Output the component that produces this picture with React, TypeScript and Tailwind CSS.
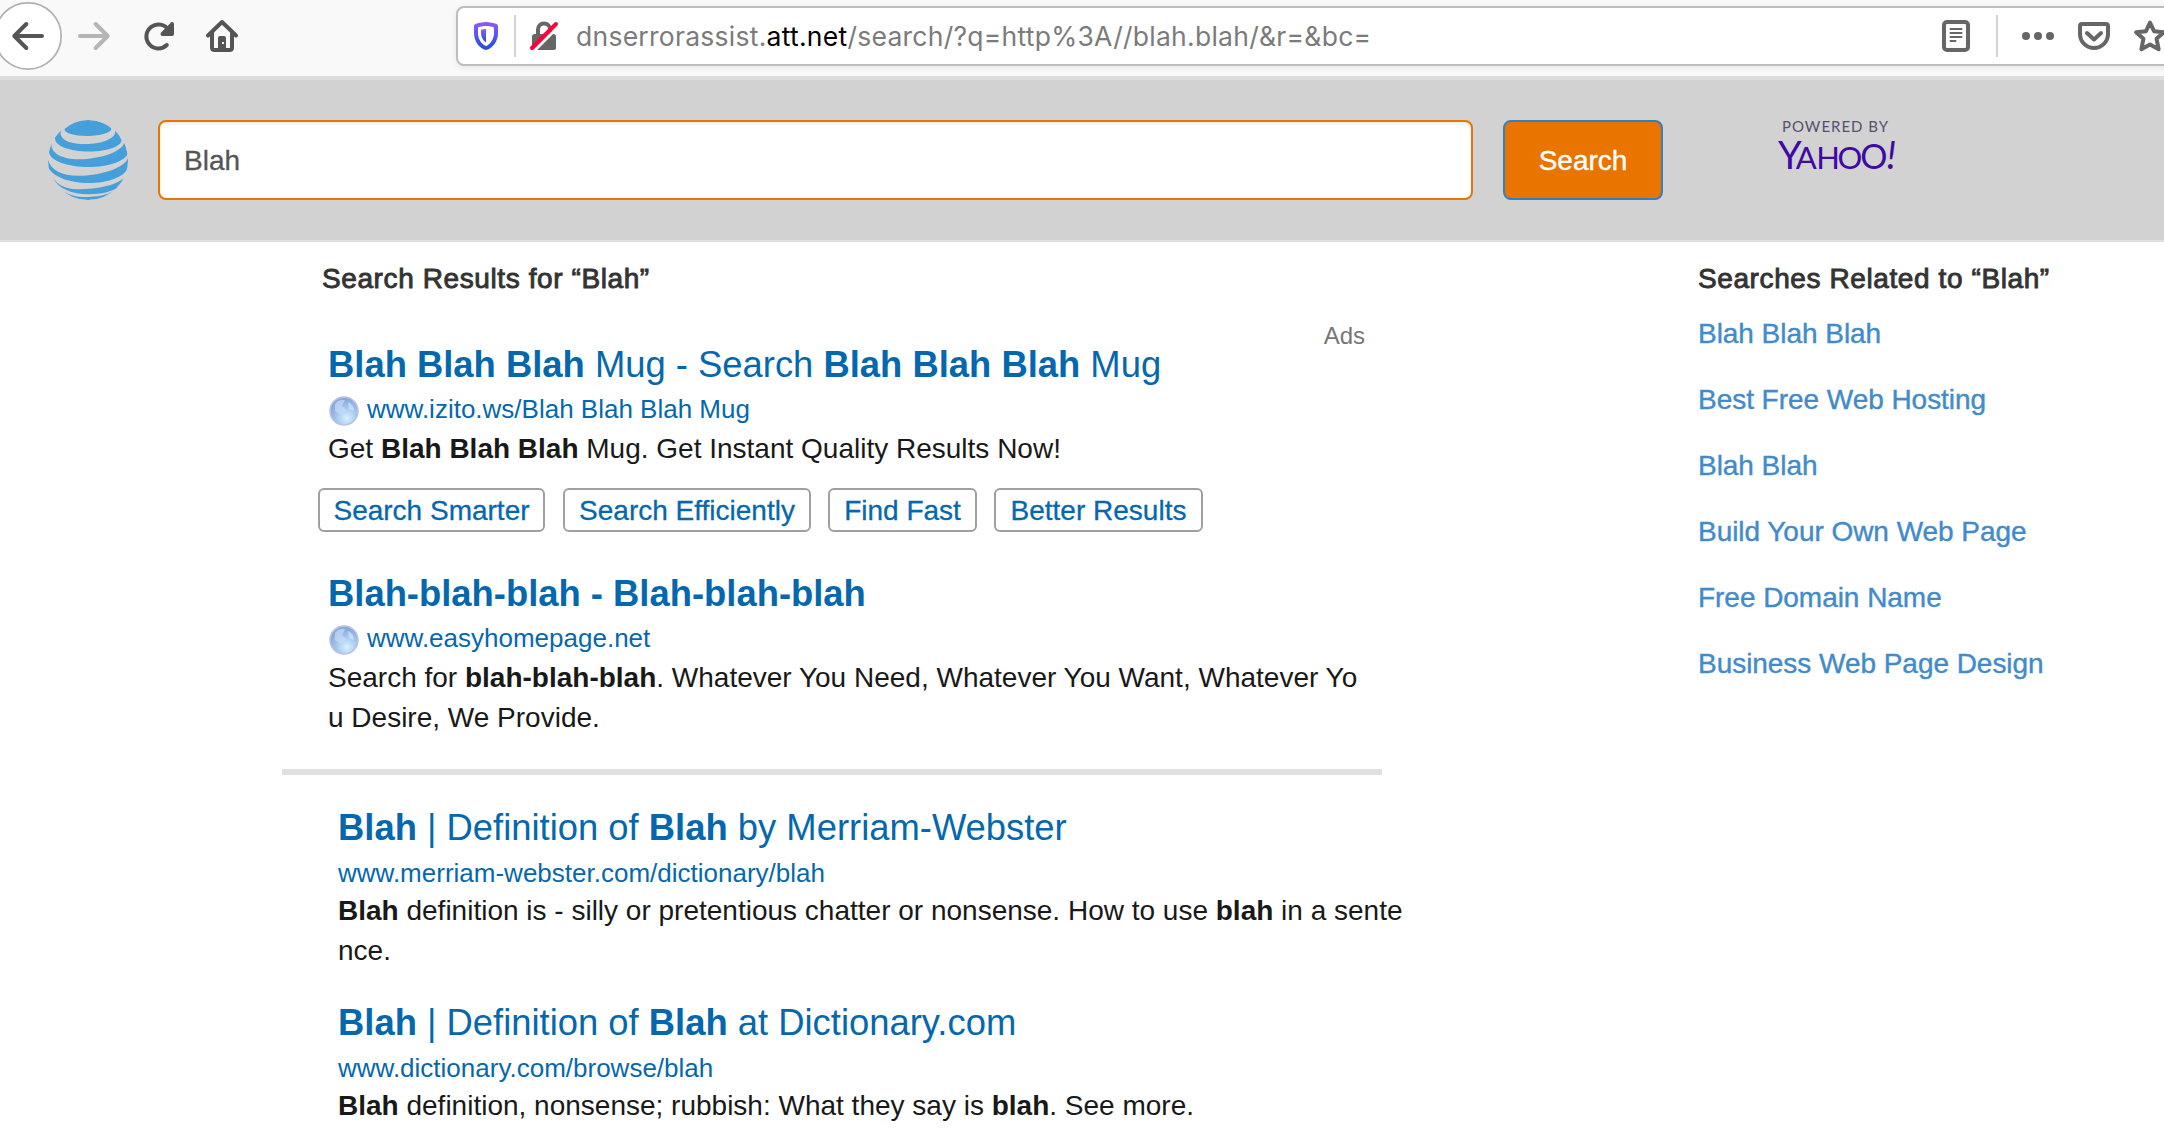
import type { ReactNode } from "react";

function AttGlobe() {
  return (
    <svg className="h-20 w-20 shrink-0" viewBox="0 0 80 80" fill="#459fdb">
      <clipPath id="globe">
        <circle cx="40" cy="40" r="40" />
      </clipPath>
      <g clipPath="url(#globe)">
        <path d="M16.500 9Q27 0 40 0T63 8C65 12 53 16 39 16C26 16 16 13 16.500 9Z" />
        <path d="M13 10C11 17 16 24 37 24C55 24 69 18 67 10.500Q71 14 73.500 20C74 26 60 31.500 41 31.500C22 31.500 6 26 7 17.500Q9 13 13 10Z" />
        <path d="M3.500 23C2 33 14 39.300 31 39.300C52 39.300 77 31 76 21.500Q79 27 79.500 34C77 41 60 47 41 47C20 47 2 41 1 32Q1.500 28 3.500 23Z" />
        <path d="M0 40C3 50 14 55.800 30 55.800C52 55.800 77 48 80 38V48C76 57 60 63 41 63C20 63 4 56 0 47Z" />
        <path d="M4.500 57C8 64 17 69.300 29 69.300C50 69.300 71 65 77.500 56Q75 62 71 66.500C64 72 53 74.200 41 74.200C24 74.200 10 69 4.500 57Z" />
        <path d="M16 71.500C21 75 28 77 37 77C49 77 60 75 66 70.500C60 77 50 80 40 80S21 77 16 71.500Z" />
      </g>
    </svg>
  );
}

function NavIcons() {
  return (
    <svg className="h-[76px] w-[248px] shrink-0" viewBox="0 0 248 76" fill="none" strokeLinecap="round" strokeLinejoin="round">
      <circle cx="28" cy="36" r="33.200" fill="#fff" stroke="#b1b1b1" strokeWidth="1.700" />
      <path d="M42 36H14.500M26.300 24L14.300 36L26.300 48" stroke="#555556" strokeWidth="4" />
      <path d="M80 36H107.500M95.700 24L107.700 36L95.700 48" stroke="#b5b5b5" strokeWidth="4" />
      <path d="M166.800 45A12 12 0 1 1 168.500 30" stroke="#555556" strokeWidth="4" />
      <path d="M172 24V34H162.500L172 24.500Z" fill="#555556" stroke="#555556" strokeWidth="4" />
      <path d="M208 35.500L222 22L236 35.500M212 33V47.500Q212 50 214.500 50H229.500Q232 50 232 47.500V33" stroke="#555556" strokeWidth="4" />
      <path d="M218 50V38Q218 36 220 36H224Q226 36 226 38V50Z" fill="#555556" />
      <rect x="222" y="42" width="2" height="2" fill="#f9f9fa" />
    </svg>
  );
}

function ShieldIcon() {
  return (
    <svg className="h-7 w-6 shrink-0" viewBox="0 0 24 28" fill="none">
      <linearGradient id="shield" x1="0" y1="0" x2="0" y2="1">
        <stop offset="0" stopColor="#9059ff" />
        <stop offset="1" stopColor="#2050d0" />
      </linearGradient>
      <path
        d="M12 0C16 0 20 1 22.500 2Q24 2.500 24 4V11C24 19 19 26.500 12 28C5 26.500 0 19 0 11V4Q0 2.500 1.500 2C4 1 8 0 12 0ZM12 4C9 4 6 4.600 4 5.400V11C4 17 7.500 22.300 12 24C16.500 22.300 20 17 20 11V5.400C18 4.600 15 4 12 4Z"
        fill="url(#shield)"
        fillRule="evenodd"
      />
      <path d="M12 7V20.500C9 18.500 7 15 7 11V7.800Q9.500 7 12 7Z" fill="url(#shield)" />
    </svg>
  );
}

function InsecureLockIcon() {
  return (
    <svg className="h-8 w-8 shrink-0" viewBox="0 0 32 32" fill="none">
      <path d="M10 15V9.500A6 6 0 0 1 22 9.500V15" stroke="#666" strokeWidth="4" />
      <rect x="4" y="14" width="24" height="16" rx="2.500" fill="#666" />
      <path d="M6 31L30 7" stroke="#fff" strokeWidth="3" />
      <path d="M4 28L28 4" stroke="#ff0039" strokeWidth="4" strokeLinecap="round" />
    </svg>
  );
}

function PageActions() {
  return (
    <svg className="h-16 w-[226px] shrink-0" viewBox="1940 4 226 64" fill="none" stroke="#666" strokeLinecap="round" strokeLinejoin="round">
      <rect x="1944" y="22" width="24" height="28" rx="3" strokeWidth="4" />
      <path d="M1950.500 29H1961.500M1950.500 33H1961.500M1950.500 37H1961.500M1950.500 41H1955.500" strokeWidth="2" />
      <path d="M1997 15V57" stroke="#d2d2d2" strokeWidth="2" strokeLinecap="butt" />
      <g fill="#666" stroke="none">
        <circle cx="2026" cy="36" r="4" />
        <circle cx="2038" cy="36" r="4" />
        <circle cx="2050" cy="36" r="4" />
      </g>
      <path d="M2082 24H2106Q2108 24 2108 26V34A14 14 0 0 1 2080 34V26Q2080 24 2082 24Z" strokeWidth="4" />
      <path d="M2087 33L2094 39.500L2101 33" strokeWidth="4" />
      <path d="M2150 22.500L2154 31.200L2163.800 32.300L2156.600 38.800L2158.600 49.200L2150 44.600L2141.400 49.200L2143.400 38.800L2136.200 32.300L2146 31.200Z" strokeWidth="4" />
    </svg>
  );
}

function Favicon() {
  return (
    <svg className="mt-[5px] ml-px h-[30px] w-[30px] shrink-0" viewBox="0 0 30 30">
      <radialGradient id="orb" cx="0.6" cy="0.75" r="0.8">
        <stop offset="0" stopColor="#d9f1fd" />
        <stop offset="0.450" stopColor="#a4c8ee" />
        <stop offset="0.850" stopColor="#86a6dc" />
        <stop offset="1" stopColor="#a9b6de" />
      </radialGradient>
      <circle cx="15" cy="15" r="14" fill="url(#orb)" stroke="#b9c3e4" strokeWidth="1.500" />
      <path d="M6 8Q10 3 16 4L13 10L17 14L12 19L6 15Z" fill="#c8dcf5" opacity="0.700" />
      <path d="M19 6Q25 9 25 15L20 13Z" fill="#d3e6fa" opacity="0.700" />
    </svg>
  );
}

function Title({ children }: { children: ReactNode }) {
  return <h3 className="whitespace-nowrap text-[36.4px] leading-10 text-[#0568ae]">{children}</h3>;
}

function Url({ icon, children }: { icon?: boolean; children: ReactNode }) {
  return (
    <div className={`${icon ? "mt-1.5 mb-0.5" : "mt-[7px]"} flex h-9 gap-2 text-[26px] leading-9 text-[#0568ae]`}>
      {icon && <Favicon />}
      <span>{children}</span>
    </div>
  );
}

function Description({ children }: { children: ReactNode }) {
  return <p className="whitespace-nowrap text-[28px] leading-10 text-[#191919]">{children}</p>;
}

const chips = [
  { label: "Search Smarter", box: "w-[227px]" },
  { label: "Search Efficiently", box: "ml-[18px] w-[248px]" },
  { label: "Find Fast", box: "ml-[17px] w-[149px]" },
  { label: "Better Results", box: "ml-[17px] w-[209px]" },
];

const related = [
  "Blah Blah Blah",
  "Best Free Web Hosting",
  "Blah Blah",
  "Build Your Own Web Page",
  "Free Domain Name",
  "Business Web Page Design",
];

export default function App() {
  return (
    <div className="h-[1146px] w-[2164px] overflow-hidden bg-white font-['Liberation_Sans',Arial,sans-serif]">
      <div className="flex h-[76px] bg-[#f9f9fa]">
        <NavIcons />
        <div className="mt-1.5 ml-[208px] flex h-[60px] w-[1800px] shrink-0 items-center rounded-lg border-2 border-[#bdbdbd] bg-white shadow-[0_2px_6px_rgba(0,0,0,0.08)]">
          <div className="ml-4">
            <ShieldIcon />
          </div>
          <div className="ml-4 h-[42px] w-0.5 bg-[#d2d2d2]" />
          <div className="ml-3">
            <InsecureLockIcon />
          </div>
          <span className="ml-4 w-[1364px] whitespace-nowrap pt-0.5 font-['Inter',sans-serif] text-[26.5px] tracking-[0.260px] text-[#7b7b7b]">
            dnserrorassist.<span className="text-black">att.net</span>/search/?q=http%3A//blah.blah/&amp;r=&amp;bc=
          </span>
          <PageActions />
        </div>
      </div>
      <div className="h-1 bg-[#dddddd]" />

      <header className="flex h-[162px] border-b-2 border-[#dfdfdf] bg-[#d2d2d2] pt-10 pl-12">
        <AttGlobe />
        <div className="ml-[30px] flex h-20 w-[1315px] shrink-0 items-center rounded-lg border-2 border-[#ea7400] bg-white pt-0.5 pl-6 text-[28px] text-[#555] shadow-[inset_0_2px_3px_rgba(0,0,0,0.08)] [-webkit-text-stroke:0.3px_#555]">
          Blah
        </div>
        <button className="ml-[30px] flex h-20 w-40 shrink-0 items-center justify-center rounded-lg border-2 border-[#357ebd] bg-[#ea7400] pt-0.5 text-[28px] text-white [-webkit-text-stroke:0.4px_white]">
          Search
        </button>
        <div className="ml-[115px] w-[130px] font-['Lato',sans-serif]">
          <div className="ml-1 h-3 whitespace-nowrap text-[15px] leading-3 tracking-[1px] text-[#55506f]">POWERED BY</div>
          <div className="mt-1 flex h-9 items-baseline text-[31px] leading-9 text-[#4008a4]">
            <span className="text-[38px]">Y</span>
            <span className="-ml-1.5 tracking-[-0.5px]">AH</span>
            <span className="-ml-0.5">O</span>
            <span className="-ml-0.5 text-[34px]">O</span>
            <span className="-ml-px text-[38px] italic">!</span>
          </div>
        </div>
      </header>

      <main className="flex">
        <section className="w-[1416px] shrink-0 pt-[17px]">
          <h2 className="pl-[322px] text-[28px] leading-10 tracking-[0.600px] text-[#333] [-webkit-text-stroke:0.9px_#333]">
            Search Results for “Blah”
          </h2>
          <div className="mt-7 pr-[51px] text-right text-2xl leading-[18px] text-[#777]">Ads</div>
          <article className="pl-[328px]">
            <Title>
              <b>Blah Blah Blah</b> Mug - Search <b>Blah Blah Blah</b> Mug
            </Title>
            <Url icon>www.izito.ws/Blah Blah Blah Mug</Url>
            <Description>
              Get <b>Blah Blah Blah</b> Mug. Get Instant Quality Results Now!
            </Description>
          </article>
          <div className="mt-[19px] flex pl-[318px]">
            {chips.map((c) => (
              <div
                key={c.label}
                className={`${c.box} flex h-11 shrink-0 items-center justify-center rounded-md border-2 border-[#a0a0a0] pt-px text-[28px] text-[#0568ae] [-webkit-text-stroke:0.3px_#0568ae]`}
              >
                {c.label}
              </div>
            ))}
          </div>
          <article className="mt-[42px] pl-[328px]">
            <Title>
              <b>Blah-blah-blah</b> <b>-</b> <b>Blah-blah-blah</b>
            </Title>
            <Url icon>www.easyhomepage.net</Url>
            <Description>
              Search for <b>blah-blah-blah</b>. Whatever You Need, Whatever You Want, Whatever Yo
              <br />u Desire, We Provide.
            </Description>
          </article>
          <div className="mt-[31px] ml-[282px] h-1.5 w-[1100px] bg-[#e0e0e0]" />
          <article className="mt-[33px] pl-[338px]">
            <Title>
              <b>Blah</b> | Definition of <b>Blah</b> by Merriam-Webster
            </Title>
            <Url>www.merriam-webster.com/dictionary/blah</Url>
            <Description>
              <b>Blah</b> definition is - silly or pretentious chatter or nonsense. How to use <b>blah</b> in a sente
              <br />
              nce.
            </Description>
          </article>
          <article className="mt-8 pl-[338px]">
            <Title>
              <b>Blah</b> | Definition of <b>Blah</b> at Dictionary.com
            </Title>
            <Url>www.dictionary.com/browse/blah</Url>
            <Description>
              <b>Blah</b> definition, nonsense; rubbish: What they say is <b>blah</b>. See more.
            </Description>
          </article>
        </section>
        <aside className="pt-[17px] pl-[282px] whitespace-nowrap text-[28px] leading-10">
          <h2 className="tracking-[0.600px] text-[#333] [-webkit-text-stroke:0.9px_#333]">Searches Related to “Blah”</h2>
          <ul className="mt-[15px] flex flex-col gap-[26px] tracking-[-0.040px] text-[#428bca] [-webkit-text-stroke:0.4px_#428bca]">
            {related.map((label) => (
              <li key={label}>{label}</li>
            ))}
          </ul>
        </aside>
      </main>
    </div>
  );
}
